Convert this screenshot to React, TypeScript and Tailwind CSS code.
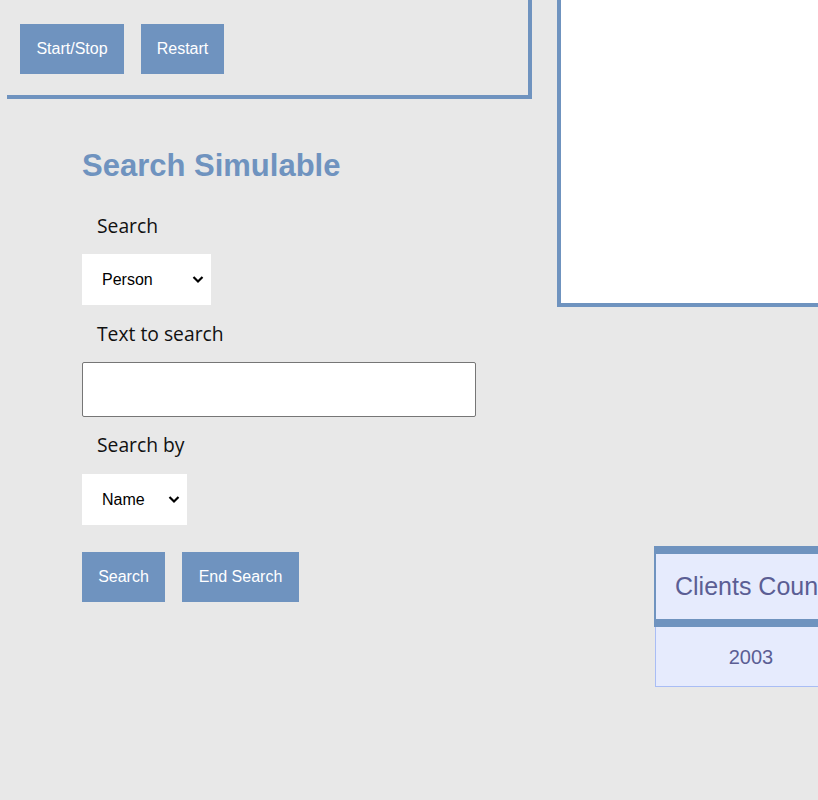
import React from 'react';

const Btn: React.FC<{ label: string; width: string }> = ({ label, width }) => (
  <button className={`${width} h-[50px] bg-[#6f93bf] text-white text-[16px] leading-none text-center font-['Liberation_Sans',Arial,sans-serif]`}>
    {label}
  </button>
);

const Label: React.FC<{ text: string }> = ({ text }) => (
  <div className="pl-[15px] text-[19.3px] leading-[28px] text-[#111] font-['Open_Sans','Noto_Sans',sans-serif]">
    {text}
  </div>
);

// native select with a heavier chevron drawn on top
const Select: React.FC<{ width: string; value: string; options: string[] }> = ({ width, value, options }) => (
  <div className={`relative ${width} h-[51px]`}>
    <select
      defaultValue={value}
      className="appearance-none w-full h-full bg-white pl-[20px] pr-[24px] text-[16px] text-black font-['Liberation_Sans',Arial,sans-serif] outline-none"
    >
      {options.map((o) => (
        <option key={o} value={o}>{o}</option>
      ))}
    </select>
    <svg
      className="absolute right-[7px] top-[21px] pointer-events-none"
      width="12"
      height="9"
      viewBox="0 0 12 9"
      fill="none"
    >
      <path d="M1.5 2 L6 6.5 L10.5 2" stroke="#000" strokeWidth="2.2" />
    </svg>
  </div>
);

const App: React.FC = () => {
  return (
    <div className="w-[818px] h-[800px] overflow-hidden bg-[#e8e8e8] flex font-['Liberation_Sans',Arial,sans-serif]">
      {/* Left column */}
      <div className="w-[532px] shrink-0 flex flex-col">
        {/* Simulation controls panel */}
        <div className="ml-[7px] h-[99px] border-r-4 border-b-4 border-[#6f93bf] flex items-start gap-[17px] pl-[13px] pt-[24px]">
          <Btn label="Start/Stop" width="w-[104px]" />
          <Btn label="Restart" width="w-[83px]" />
        </div>

        {/* Search section */}
        <div className="pl-[82px] mt-[50px] flex flex-col">
          <h2 className="text-[31px] leading-[34px] font-bold text-[#6f93bf]">Search Simulable</h2>

          <div className="mt-[29px]">
            <Label text="Search" />
          </div>
          <div className="mt-[14px]">
            <Select width="w-[129px]" value="Person" options={['Person', 'Company']} />
          </div>

          <div className="mt-[15px]">
            <Label text="Text to search" />
          </div>
          <input
            type="text"
            className="mt-[14px] w-[394px] h-[55px] bg-white border border-[#767676] rounded-[2px] px-2 text-[16px] outline-none"
          />

          <div className="mt-[14px]">
            <Label text="Search by" />
          </div>
          <div className="mt-[15px]">
            <Select width="w-[105px]" value="Name" options={['Name', 'Id']} />
          </div>

          <div className="mt-[27px] flex gap-[17px]">
            <Btn label="Search" width="w-[83px]" />
            <Btn label="End Search" width="w-[117px]" />
          </div>
        </div>
      </div>

      {/* Right column */}
      <div className="flex-1 flex flex-col">
        <div className="ml-[25px] w-[300px] h-[307px] bg-white border-l-4 border-b-4 border-[#6f93bf]" />

        {/* Clients table */}
        <div className="ml-[122px] mt-[239px] w-[192px] shrink-0 flex flex-col">
          <div className="h-[81px] bg-[#e6ebfd] border-l-2 border-t-8 border-b-8 border-[#6f93bf] flex items-center pl-[19px] whitespace-nowrap">
            <span className="text-[25px] text-[#5b5e94]">Clients Count</span>
          </div>
          <div className="ml-px h-[60px] bg-[#e6ebfd] border-l border-b border-[#a9bdf5] flex items-center justify-center">
            <span className="text-[20px] text-[#5b5e94]">2003</span>
          </div>
        </div>
      </div>
    </div>
  );
};

export default App;
